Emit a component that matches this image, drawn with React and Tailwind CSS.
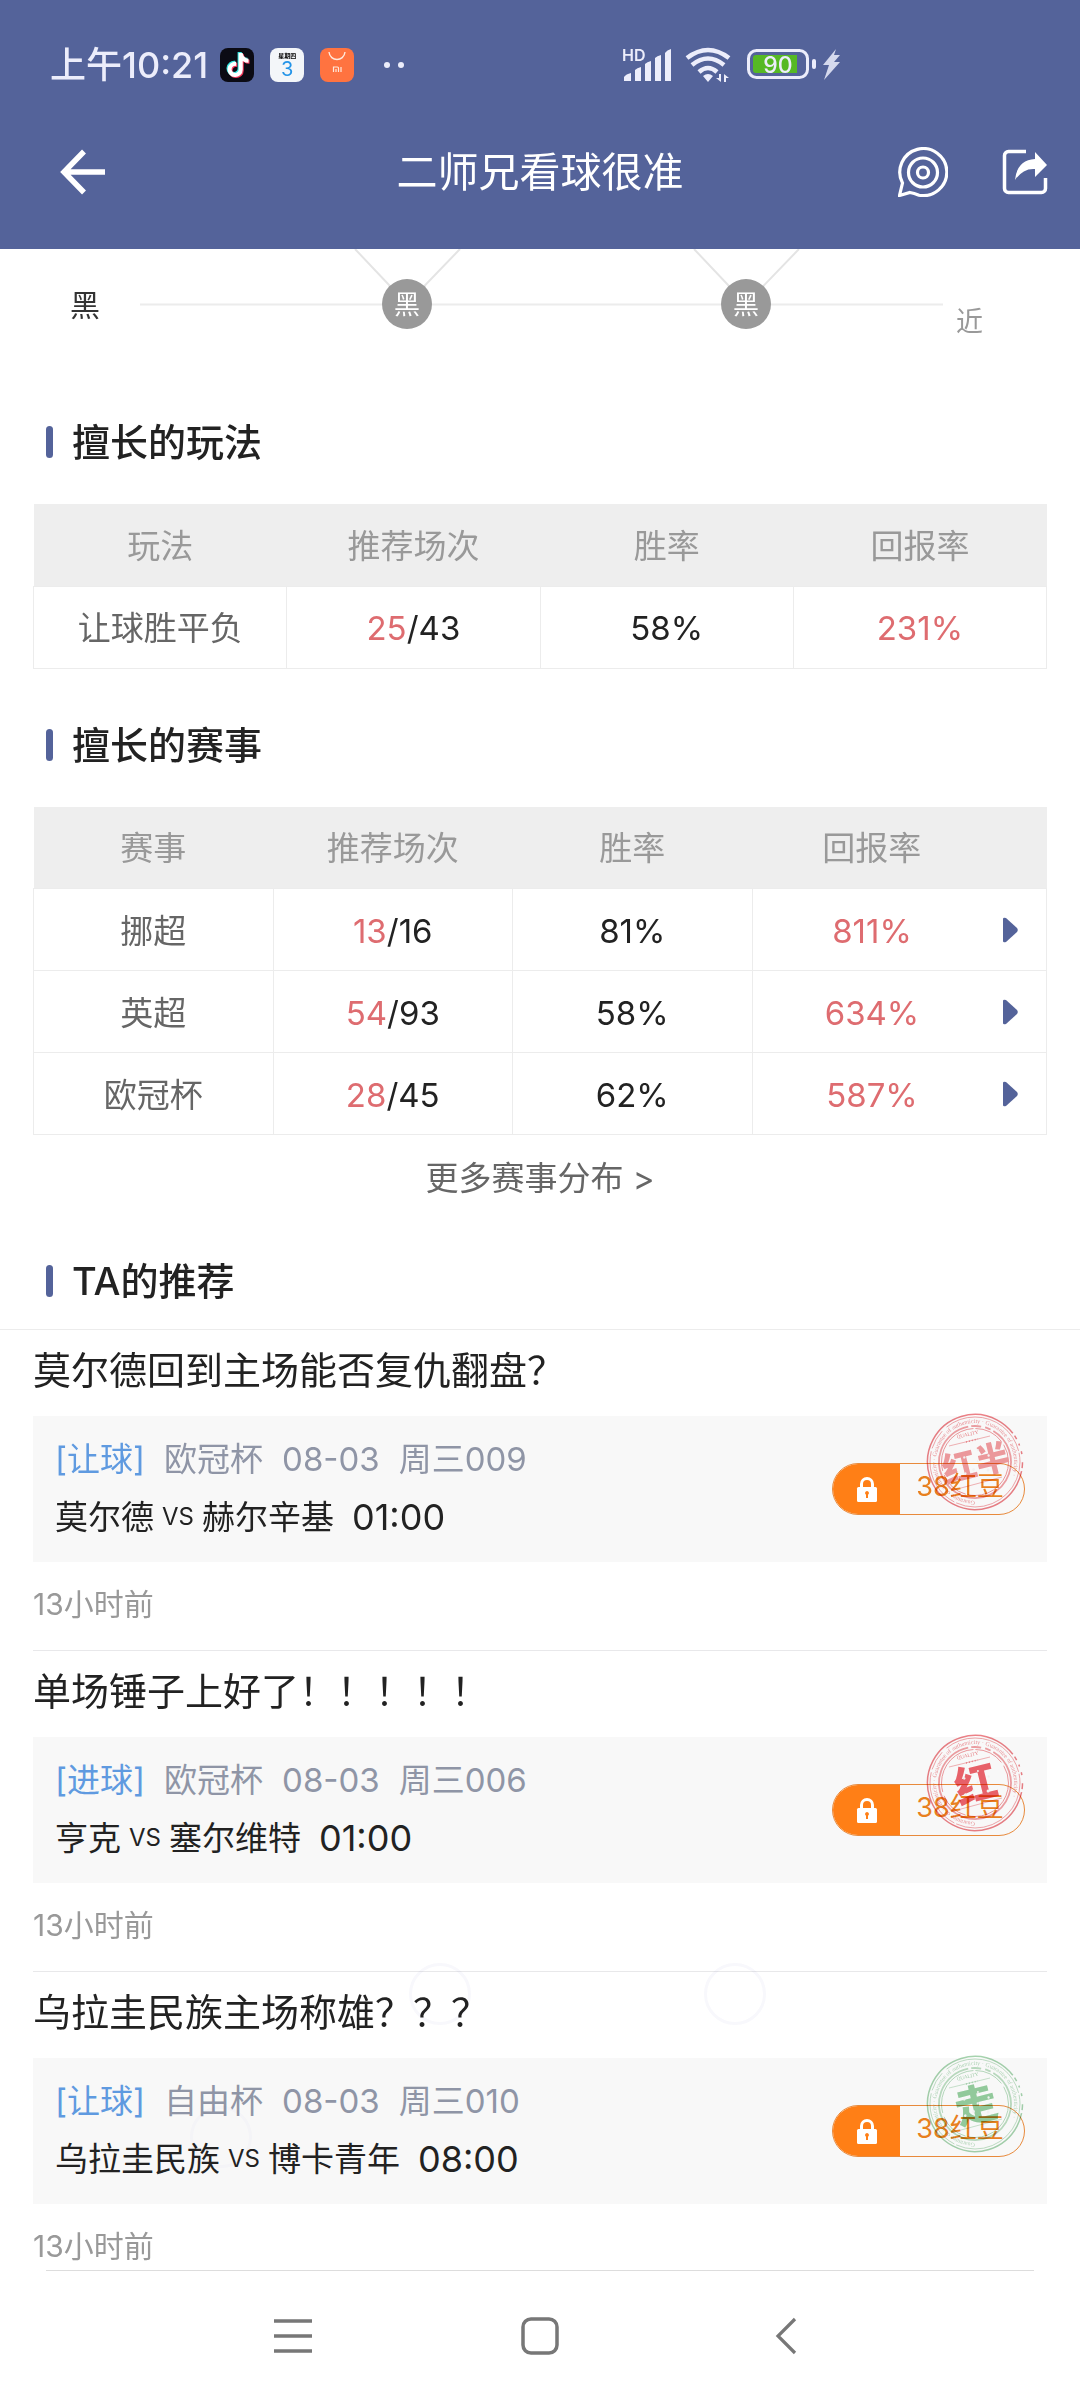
import React from "react";
import { FaTiktok } from "react-icons/fa";

const playTypes = [{ name: "让球胜平负", hit: 25, total: 43, rate: "58%", payback: "231%" }];

const leagues = [
  { name: "挪超", hit: 13, total: 16, rate: "81%", payback: "811%" },
  { name: "英超", hit: 54, total: 93, rate: "58%", payback: "634%" },
  { name: "欧冠杯", hit: 28, total: 45, rate: "62%", payback: "587%" },
];

const tips = [
  {
    title: "莫尔德回到主场能否复仇翻盘？",
    type: "让球",
    league: "欧冠杯",
    date: "08-03",
    code: "周三009",
    home: "莫尔德",
    away: "赫尔辛基",
    time: "01:00",
    price: 38,
    posted: "13小时前",
    stamp: { label: "红半", ring: "#ec8187", ink: "#f29ca0", size: 34 },
  },
  {
    title: "单场锤子上好了！！！！！",
    type: "进球",
    league: "欧冠杯",
    date: "08-03",
    code: "周三006",
    home: "亨克",
    away: "塞尔维特",
    time: "01:00",
    price: 38,
    posted: "13小时前",
    stamp: { label: "红", ring: "#ec8187", ink: "#ee646c", size: 42 },
  },
  {
    title: "乌拉圭民族主场称雄？？？",
    type: "让球",
    league: "自由杯",
    date: "08-03",
    code: "周三010",
    home: "乌拉圭民族",
    away: "博卡青年",
    time: "08:00",
    price: 38,
    posted: "13小时前",
    stamp: { label: "走", ring: "#a6d3ae", ink: "#96cf9f", size: 42 },
  },
];

/** System status bar: clock, notification icons, signal, battery */
const StatusBar = () => (
  <div className="flex h-[130px] items-center pl-[50px] text-[#ecedfb]">
    <span className="text-[36px] leading-[48px] font-medium">上午10:21</span>

    {/* Notification icons */}
    <div className="ml-3 flex items-center gap-4">
      <span className="relative h-[34px] w-[34px] rounded-lg bg-[#0b0b14]">
        <FaTiktok className="absolute top-[4px] left-[5px] h-6 w-6 text-[#35e5e0]" />
        <FaTiktok className="absolute top-[6px] left-[7px] h-6 w-6 text-[#f5385c]" />
        <FaTiktok className="absolute top-[5px] left-[6px] h-6 w-6 text-white" />
      </span>
      <span className="flex h-[34px] w-[34px] flex-col items-center rounded-lg bg-[#f3f6f9] pt-1">
        <span className="text-[6px] leading-[8px] font-bold text-black">星期四</span>
        <span className="text-[20px] leading-[18px] text-[#2394e8]">3</span>
      </span>
      <svg className="h-[34px] w-[34px]" viewBox="0 0 34 34" fill="none">
        <rect width="34" height="34" rx="8" fill="#ff7340" />
        <path d="M9 4c1 10 15 10 16 0" stroke="#ffe9dc" strokeWidth="1.4" />
        <path d="M13.500 24v-5h4a1 1 0 0 1 1 1v4M16 24v-3M21 24v-5" stroke="#ffe9dc" strokeWidth="1.2" />
      </svg>
    </div>
    <div className="ml-[30px] flex gap-2">
      <span className="h-[6px] w-[6px] rounded-full bg-current" />
      <span className="h-[6px] w-[6px] rounded-full bg-current" />
    </div>

    {/* Radio and battery */}
    <svg className="ml-auto h-[48px] w-[220px]" viewBox="0 -6 220 48" fill="currentColor">
      <text x="0" y="14" fontSize="16" fontWeight="600">HD</text>
      <path d="M2 34v-4q2-3 7-4v8zM13 34V23q2-2 6-3v14zM23 34V17q2-2 6-3v20zM33 34V11q2-2 6-3v26zM43 34V6q2-3 6-4v32z" />
      <path d="M65 11q21-16 42 0M70 18q16-13 32 0M77 25q9-8 18 0" fill="none" stroke="currentColor" strokeWidth="4.500" />
      <path d="M81 29q5-4 10 0l-5 6zM99 27v8l-5-4h3v-4zM102 35v-8l5 4h-3v4z" />
      <rect x="126.500" y="3.500" width="59" height="27" rx="8" fill="none" stroke="currentColor" strokeWidth="3" />
      <path d="M134 8h41v18h-41a3 3 0 0 1-3-3V11a3 3 0 0 1 3-3z" fill="#56b924" />
      <text x="156" y="25.500" fontSize="23" fontWeight="500" textAnchor="middle">90</text>
      <rect x="190" y="12" width="4" height="10" rx="2" />
      <path d="M214 2l-13 16h6l-5 15 16-18h-6l6-7h-6z" opacity=".85" />
    </svg>
    <div className="w-[238px]" />
  </div>
);

/** Page header with back, chat and share */
const TopBar = () => (
  <div className="grid h-[84px] grid-cols-[200px_1fr_200px] items-center text-white">
    <button aria-label="返回" className="pl-[60px]">
      <svg className="h-[46px] w-[46px]" viewBox="0 0 46 46" fill="none" stroke="currentColor" strokeWidth="5.500">
        <path d="M24 2.500L4 23l20 20.500M4 23h41" />
      </svg>
    </button>
    <h1 className="text-center text-[41px] leading-[56px]">二师兄看球很准</h1>
    <div className="flex items-center justify-end gap-[54px] pr-[32px]">
      <button aria-label="消息">
        <svg className="h-[50px] w-[50px]" viewBox="0 0 50 50" fill="none" stroke="currentColor" strokeWidth="3.200">
          <path d="M4.500 36A23.500 23.500 0 1 1 21 48.200Q16 46 12 45.500L1.500 48.500z" />
          <circle cx="25" cy="25.500" r="14.500" />
          <circle cx="25" cy="25.500" r="5.500" />
        </svg>
      </button>
      <button aria-label="分享">
        <svg className="h-[46px] w-[46px]" viewBox="0 0 46 46" fill="none">
          <path d="M24 2.500H6.500a4 4 0 0 0-4 4v33a4 4 0 0 0 4 4h33a4 4 0 0 0 4-4V29" stroke="currentColor" strokeWidth="3.500" />
          <path d="M33 3l12 13-12 12v-8q-12-1-20 11Q15 11 33 10z" fill="currentColor" />
        </svg>
      </button>
    </div>
  </div>
);

/** Lower part of the recent form chart */
const FormChart = () => (
  <svg className="block w-full" viewBox="0 0 1080 116">
    <path d="M140 55.500H943" stroke="#ececec" strokeWidth="2" />
    <path d="M355 0L407 55L460 0M694 0L746 55L799 0" fill="none" stroke="#e4e4e4" strokeWidth="2" />
    <text x="70" y="67" fontSize="30" fill="#333">黑</text>
    {[407, 746].map((x) => (
      <g key={x}>
        <circle cx={x} cy="55" r="25" fill="#999" />
        <text x={x} y="65" fontSize="26" fill="#fff" textAnchor="middle">黑</text>
      </g>
    ))}
    <text x="956" y="82" fontSize="27" fill="#999">近</text>
  </svg>
);

const SectionTitle = ({ children }) => (
  <h2 className="flex items-center gap-[19px] pl-[46px] text-[38px] leading-[54px] font-medium">
    <span className="h-8 w-[7px] rounded-full bg-[#54639a]" />
    {children}
  </h2>
);

/**
 * Win-rate table
 * @param {string} label - Heading of the first column
 * @param {Array} rows - Table rows
 * @param {boolean} expandable - Whether rows have an arrow at the end
 */
const StatsTable = ({ label, rows, expandable }) => (
  <div className="px-[33px]">
    <table className="w-full table-fixed border-collapse text-center text-[33px] leading-[48px]">
      <thead>
        <tr className="h-[82px] bg-[#eee] text-[#999]">
          <th className="pt-[2px] font-normal">{label}</th>
          <th className="pt-[2px] font-normal">推荐场次</th>
          <th className="pt-[2px] font-normal">胜率</th>
          <th className="pt-[2px] font-normal">回报率</th>
          {expandable && <th aria-label="详情" className="w-[55px]" />}
        </tr>
      </thead>
      <tbody>
        {rows.map((row) => (
          <tr key={row.name} className="h-[82px] border border-[#ececec]">
            <td className="border-r border-[#ececec] pt-[2px] text-[#666]">{row.name}</td>
            <td className="border-r border-[#ececec] pt-[2px]">
              <span className="text-[#de6c70]">{row.hit}</span>/{row.total}
            </td>
            <td className="border-r border-[#ececec] pt-[2px]">{row.rate}</td>
            <td className="pt-[2px] text-[#de6c70]">{row.payback}</td>
            {expandable && (
              <td className="w-[55px]">
                <button aria-label={row.name} className="block pl-[10px] text-[#54639a]">
                  <svg className="h-[26px] w-[16px]" viewBox="0 0 16 26" fill="currentColor">
                    <path d="M1 2q0-2 3-1l11 10q1.500 2 0 4L4 25q-3 1-3-1z" />
                  </svg>
                </button>
              </td>
            )}
          </tr>
        ))}
      </tbody>
    </table>
  </div>
);

/** Round result stamp that lies over the price button */
const Stamp = ({ id, label, ring, ink, size }) => (
  <svg className="pointer-events-none absolute -top-[3px] right-[23px] h-[98px] w-[98px] mix-blend-multiply" viewBox="0 0 98 98" fill="none">
    <defs>
      <path id={id} d="M49 88a39 39 0 1 1 .1 0" />
    </defs>
    <g stroke={ring}>
      <circle cx="49" cy="49" r="47.500" strokeWidth="1.500" strokeDasharray="244 3 4 5 2 6 3 8 6 3" transform="rotate(28 49 49)" />
      <circle cx="49" cy="49" r="45" strokeWidth=".7" strokeDasharray="90 2 60 3 20 6" />
      <circle cx="49" cy="49" r="36" strokeWidth="1.800" strokeDasharray="150 3 10 4 6 3" transform="rotate(20 49 49)" opacity=".75" />
      <circle cx="49" cy="49" r="33.500" strokeWidth=".8" strokeDasharray="60 2 30 4" />
      <path d="M23 33L64 23M35 75L76 64" strokeWidth=".6" />
      <path d="M40 29L52 26" strokeWidth="1.500" strokeDasharray="1 2" />
    </g>
    <g fill={ring} fontFamily="Liberation Serif, serif">
      <text fontSize="6" opacity=".85">
        <textPath href={`#${id}`}>Guarantee of authenticity · Guarantee of authenticity · Guarantee of authenticity ·</textPath>
      </text>
      <text x="42" y="23" fontSize="5" textAnchor="middle" transform="rotate(-13 42 23)">QUALITY</text>
    </g>
    <g transform="rotate(-14 49 50)">
      <text x="50" y={50 + size * 0.37} fontSize={size} fontWeight="900" fill={ink} textAnchor="middle">
        {label}
      </text>
      <g fill="#f8f8f8">
        <circle cx="40" cy="42" r="1.200" />
        <circle cx="46" cy="56" r="1.400" />
        <circle cx="55" cy="38" r="1" />
        <circle cx="60" cy="60" r="1.500" />
        <circle cx="37" cy="58" r="1.300" />
        <circle cx="52" cy="49" r="1.100" />
        <circle cx="64" cy="46" r="1.200" />
      </g>
    </g>
  </svg>
);

const PriceButton = ({ price }) => (
  <button className="flex h-[52px] w-[193px] overflow-hidden rounded-full border border-[#e88a3c] text-[27px] text-[#e8801f]">
    <span className="flex h-full w-[67px] items-center justify-center bg-[#ff7f16]">
      <svg className="h-[27px] w-[22px]" viewBox="0 0 22 27">
        <path d="M5.500 13V8a5.500 5.500 0 0 1 11 0v5" fill="none" stroke="#fff" strokeWidth="3" />
        <rect x="1" y="11" width="20" height="15" rx="1.500" fill="#fff" />
        <path d="M11 15a2 2 0 0 1 1 3.700V22h-2v-3.300A2 2 0 0 1 11 15z" fill="#ff7f16" />
      </svg>
    </span>
    <span className="flex-1 pr-1 text-center leading-[46px]">{price}红豆</span>
  </button>
);

/**
 * One recommendation
 * @param {Object} tip - Tip object
 */
const TipItem = ({ tip }) => (
  <li className="px-[33px] pt-[14px] pb-[26px] last:pb-1">
    <h3 className="text-[38px] leading-[52px]">{tip.title}</h3>
    <div className="relative mt-5 flex h-[146px] items-center justify-between bg-[#f8f8f8] px-[22px]">
      <div className="pb-[3px]">
        <p className="flex gap-[19px] text-[33px] leading-[44px] text-[#8f95a6]">
          <span className="text-[#5f9ae0]">[{tip.type}]</span>
          <span>{tip.league}</span>
          <span>{tip.date}</span>
          <span>{tip.code}</span>
        </p>
        <p className="mt-[14px] flex items-center text-[33px] leading-[44px]">
          <span>{tip.home}</span>
          <span className="px-2 text-[24px]">VS</span>
          <span>{tip.away}</span>
          <span className="ml-[18px] text-[36px]">{tip.time}</span>
        </p>
      </div>
      <PriceButton price={tip.price} />
      <Stamp id={`ring-${tip.code}`} {...tip.stamp} />
    </div>
    <p className="mt-[22px] text-[30px] leading-[40px] text-[#999]">{tip.posted}</p>
  </li>
);

const NavBar = () => (
  <nav className="flex h-[129px] items-center justify-center gap-[209px] text-[#777]">
    <button aria-label="菜单">
      <svg className="h-[38px] w-[38px]" viewBox="0 0 38 38" stroke="currentColor" strokeWidth="3.500">
        <path d="M0 4h38M0 19h38M0 34h38" />
      </svg>
    </button>
    <button aria-label="主页">
      <svg className="h-[38px] w-[38px]" viewBox="0 0 38 38" fill="none" stroke="currentColor" strokeWidth="3.500">
        <rect x="2" y="2" width="34" height="34" rx="8" />
      </svg>
    </button>
    <button aria-label="返回">
      <svg className="h-[38px] w-[38px]" viewBox="0 0 38 38" fill="none" stroke="currentColor" strokeWidth="3.200">
        <path d="M27 2L10 19l17 17" />
      </svg>
    </button>
  </nav>
);

const App = () => {
  return (
    <div className="min-h-screen bg-white font-['Inter','Noto_Sans_CJK_SC',sans-serif] text-[#222]">
      <header className="bg-[#54639a] pb-[35px]">
        <StatusBar />
        <TopBar />
      </header>

      <main>
        <FormChart />

        <section className="pt-[50px]">
          <SectionTitle>擅长的玩法</SectionTitle>
          <div className="pt-[35px]">
            <StatsTable label="玩法" rows={playTypes} />
          </div>
        </section>

        <section className="pt-[49px]">
          <SectionTitle>擅长的赛事</SectionTitle>
          <div className="pt-[35px]">
            <StatsTable label="赛事" rows={leagues} expandable />
          </div>
          <a href="#leagues" className="block pt-[19px] text-center text-[33px] leading-[48px] text-[#666]">
            更多赛事分布 &gt;
          </a>
        </section>

        <section className="pt-[52px]">
          <SectionTitle>TA的推荐</SectionTitle>
          <div className="relative mt-[21px] border-t border-[#ececec]">
            <ul>
              {tips.map((tip, i) => (
                <React.Fragment key={tip.code}>
                  {i > 0 && <li aria-hidden="true" className="mx-[33px] h-px bg-[#e8e8ea]" />}
                  <TipItem tip={tip} />
                </React.Fragment>
              ))}
            </ul>
            {/* Faint touch ripples */}
            <span className="absolute bottom-[245px] left-[409px] h-[62px] w-[62px] rounded-full border-3 border-[#f8f8fc] mix-blend-multiply" />
            <span className="absolute bottom-[245px] left-[704px] h-[62px] w-[62px] rounded-full border-3 border-[#f8f8fc] mix-blend-multiply" />
            <span className="absolute bottom-[102px] left-[190px] h-[62px] w-[62px] rounded-full border-3 border-[#fbfbfe] mix-blend-multiply" />
          </div>
        </section>
      </main>

      <div className="mx-[46px] h-px bg-[#ddd]" />
      <NavBar />
    </div>
  );
};

export default App;
